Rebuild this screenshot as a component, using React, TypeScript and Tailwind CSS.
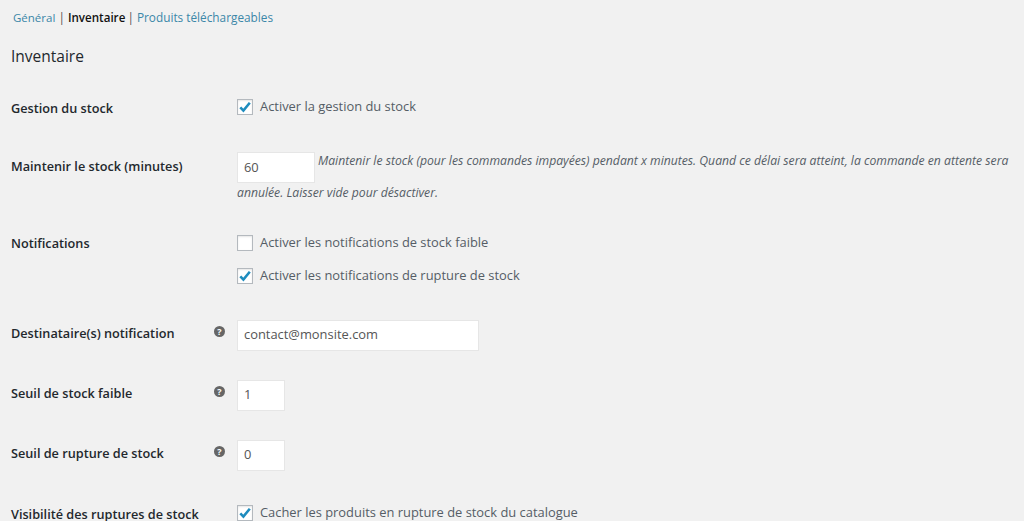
const font = "font-['Open_Sans','Noto_Sans',sans-serif]";

function Check({ checked = true, label }: { checked?: boolean; label: string }) {
  return (
    <label className="flex items-center h-[16px] text-[12.9px] text-[#555d66]">
      <span className="w-[16px] h-[16px] mr-[6px] bg-white border border-[#b4b9be] shadow-[inset_0_1px_2px_rgba(0,0,0,0.1)] flex items-center justify-center shrink-0">
        {checked && (
          <svg width="14" height="14" viewBox="0 0 14 14">
            <path d="M2.3 7.4 L5.4 10.6 L11.8 2.8" fill="none" stroke="#1e8cbe" strokeWidth="2.6" />
          </svg>
        )}
      </span>
      <span className="ml-[1px]">{label}</span>
    </label>
  );
}

function Help() {
  return (
    <span className="w-[11px] h-[11px] mb-[4px] rounded-full bg-[#666] text-white text-[9px] font-bold leading-[11px] text-center">
      ?
    </span>
  );
}

function Label({ text, help, className = "" }: { text: string; help?: boolean; className?: string }) {
  return (
    <div className={`w-[226px] shrink-0 pr-[12px] flex justify-between items-center text-[12.7px] font-semibold text-[#23282d] ${className}`}>
      <span>{text}</span>
      {help && <Help />}
    </div>
  );
}

function Field({ value, width }: { value: string; width: string }) {
  return (
    <div className={`${width} h-[31px] bg-white border border-[#e6e6e6] pl-[6px] flex items-center text-[12.9px] text-[#555]`}>
      {value}
    </div>
  );
}

export default function App() {
  return (
    <div className={`${font} w-[1024px] h-[521px] overflow-hidden bg-[#f1f1f1] pl-[11px]`}>
      <div className="pt-[9px] h-[38px] text-[11.8px] leading-[17px] text-[#555]">
        <a className="text-[#3b87a8] ml-[2px] text-[11.5px]">Général</a> | <b className="font-semibold text-[#111] text-[11.6px]">Inventaire</b>{" "}
        <span className="-ml-[1px]">|</span> <a className="text-[#3b87a8]">Produits téléchargeables</a>
      </div>
      <h2 className="mt-[7px] h-[22px] text-[15.5px] leading-[22px] font-normal text-[#23282d]">Inventaire</h2>

      <div className="flex items-center mt-[32px] h-[16px]">
        <Label text="Gestion du stock" className="pt-[4px]" />
        <Check label="Activer la gestion du stock" />
      </div>

      <div className="flex mt-[36px]">
        <div className="h-[31px] flex items-center">
          <Label text="Maintenir le stock (minutes)" />
        </div>
        <div className="w-[780px] text-[12.2px] italic leading-[20px] text-[#555d66]">
          <span className="inline-block align-[-7px] w-[78px] mr-[3px] not-italic">
            <Field value="60" width="w-[78px]" />
          </span>
          Maintenir le stock (pour les commandes impayées) pendant x minutes. Quand ce délai sera atteint, la commande en attente sera annulée. Laisser vide pour désactiver.
        </div>
      </div>

      <div className="flex mt-[32px]">
        <div className="h-[16px] flex items-center">
          <Label text="Notifications" className="pt-[2px]" />
        </div>
        <div className="flex flex-col gap-[17px]">
          <Check checked={false} label="Activer les notifications de stock faible" />
          <Check label="Activer les notifications de rupture de stock" />
        </div>
      </div>

      <div className="flex items-center mt-[36px]">
        <Label text="Destinataire(s) notification" help className="pb-[2px]" />
        <Field value="contact@monsite.com" width="w-[242px]" />
      </div>
      <div className="flex items-center mt-[29px]">
        <Label text="Seuil de stock faible" help className="pb-[2px]" />
        <Field value="1" width="w-[48px]" />
      </div>
      <div className="flex items-center mt-[29px]">
        <Label text="Seuil de rupture de stock" help className="pb-[2px]" />
        <Field value="0" width="w-[48px]" />
      </div>
      <div className="flex items-center mt-[32px]">
        <Label text="Visibilité des ruptures de stock" className="pt-[2px]" />
        <Check label="Cacher les produits en rupture de stock du catalogue" />
      </div>
    </div>
  );
}
